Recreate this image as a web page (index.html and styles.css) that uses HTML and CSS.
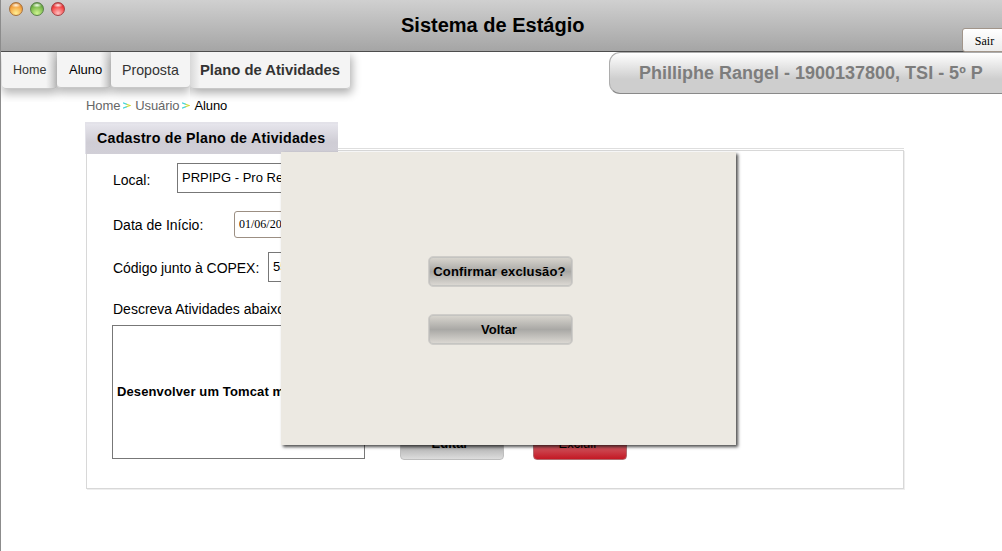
FILE: index.html
```html
<!DOCTYPE html>
<html lang="pt-BR">
<head>
<meta charset="utf-8">
<title>Sistema de Estágio</title>
<link rel="stylesheet" href="styles.css">
</head>
<body>
<div class="window">
  <header class="titlebar">
    <div class="lights"><i class="light amber"></i><i class="light green"></i><i class="light red"></i></div>
    <h1 class="app-title">Sistema de Estágio</h1>
    <button class="logout">Sair</button>
  </header>
  <div class="topbar">
    <nav class="tabs">
      <a class="tab tab-home"><span>Home</span></a>
      <a class="tab tab-student"><span>Aluno</span></a>
      <a class="tab tab-proposal"><span>Proposta</span></a>
      <a class="tab tab-plan"><span>Plano de Atividades</span></a>
    </nav>
    <div class="user"><span>Philliphe Rangel - 1900137800, TSI - 5º P</span></div>
  </div>
  <div class="crumbs"><span>Home</span><svg class="sep" viewBox="0 0 8 7"><path class="sep-tail" d="M0 .8 4 2.4M0 6.2 4 4.6" /><path class="sep-tip" d="M3.5 2.2 7.2 3.5 3.5 4.8" /></svg><span>Usuário</span><svg class="sep" viewBox="0 0 8 7"><path class="sep-tail" d="M0 .8 4 2.4M0 6.2 4 4.6" /><path class="sep-tip" d="M3.5 2.2 7.2 3.5 3.5 4.8" /></svg><span class="current">Aluno</span></div>
  <main class="panel">
    <h2 class="panel-title"><span>Cadastro de Plano de Atividades</span></h2>
    <form class="form">
      <div class="row row-place"><label>Local:</label><div class="field place">PRPIPG - Pro Reitoria</div></div>
      <div class="row row-date"><label>Data de Início:</label><div class="field date">01/06/2012</div></div>
      <div class="row row-code"><label>Código junto à COPEX:</label><div class="field code">5555</div></div>
      <label class="describe">Descreva Atividades abaixo:</label>
      <div class="row row-text">
        <div class="textarea">Desenvolver um Tomcat melhor</div>
        <div class="btn edit">Editar</div>
        <div class="btn delete">Excluir</div>
      </div>
    </form>
  </main>
  <div class="dialog">
    <button class="btn choice confirm">Confirmar exclusão?</button>
    <button class="btn choice">Voltar</button>
  </div>
</div>
</body>
</html>
```
FILE: styles.css
```css
* { box-sizing: border-box; }
body { margin: 0; background: #fff; font-family: "Liberation Sans", Arial, sans-serif; color: #000; }
.window { position: relative; width: 1002px; height: 551px; overflow: hidden; border-left: 1px solid #8c8c8c; }

.titlebar { display: grid; grid-template-columns: 400px 561px 40px; height: 52px; border-bottom: 1px solid #4d4d4d; background: linear-gradient(#d0d0d0, #a5a5a5); }
.lights { display: flex; gap: 7px; padding: 2px 0 0 8px; }
.light { width: 14px; height: 14px; border-radius: 50%; border: 1px solid; }
.amber { border-color: #a5713d; background: radial-gradient(ellipse 5px 2.5px at 50% 18%, #fff8e8, transparent), radial-gradient(circle at 50% 85%, #ffef94, #f5a340 60%, #bd6512); }
.green { border-color: #59824a; background: radial-gradient(ellipse 5px 2.5px at 50% 18%, #f4ffee, transparent), radial-gradient(circle at 50% 85%, #cff590, #79b84b 60%, #3c7221); }
.red { border-color: #a54043; background: radial-gradient(ellipse 5px 2.5px at 50% 18%, #fff0f0, transparent), radial-gradient(circle at 50% 85%, #ffc0c0, #f34444 60%, #b41217); }
.app-title { margin: 12px 0 0; font-size: 20px; line-height: 26px; white-space: nowrap; }
.logout { align-self: end; width: 44px; height: 24px; margin-bottom: -1px; padding: 0 0 0 1px; border: 1px solid #a1958a; border-radius: 3px; background: linear-gradient(#fff, #ececec); font: 12px/24px "Liberation Serif", serif; letter-spacing: .1px; color: #000; }

.topbar { display: flex; justify-content: space-between; align-items: flex-start; height: 42px; }
.tabs { display: flex; align-items: flex-start; height: 50px; padding-left: 1px; clip-path: inset(0 -16px 0 0); }
.tab { display: flex; align-items: center; height: 37px; border-bottom: 1px solid #c8c8c8; border-radius: 0 0 4px 4px; color: #333; background: linear-gradient(90deg, #f4f4f4 80%, #cfcfcf); box-shadow: 0 5px 10px rgba(0,0,0,.28); white-space: nowrap; }
.tab-home { width: 55px; padding-left: 11px; font-size: 12.5px; }
.tab-student { width: 54px; height: 36px; padding-left: 12px; font-size: 13px; color: #000; }
.tab-proposal { position: relative; width: 79px; height: 36px; padding-left: 11px; font-size: 14.2px; background: #f4f4f4; }
.tab-plan { width: 160px; padding-left: 10px; font-size: 14.8px; font-weight: bold; background: linear-gradient(90deg, #d8d8d8, #f4f4f4 10px); box-shadow: 2px 4px 10px rgba(0,0,0,.33); clip-path: inset(0 -16px -16px 0); }
.user { width: 393px; height: 42px; padding-left: 29px; border: 1px solid #adadad; border-bottom-color: #898989; border-right: 0; border-radius: 11px 0 0 11px; background: linear-gradient(#fff, #cecece 65%, #cecece); color: #7d7d7d; font-size: 18px; font-weight: bold; line-height: 41px; white-space: nowrap; }

.crumbs { display: flex; height: 28px; padding: 3px 0 0 85px; font-size: 13px; line-height: 17px; letter-spacing: -.1px; color: #666; }
.crumbs .current { color: #000; }
.sep { width: 8px; height: 7px; margin: 5px 4px 0 3px; fill: none; stroke-width: 1.2; }
.sep-tail { stroke: #45d5d8; }
.sep-tip { stroke: #cfda3c; }

.panel { width: 820px; height: 368px; margin-left: 84px; display: flex; flex-direction: column; }
.panel-title { z-index: 1; width: 253px; height: 32px; margin: 0; padding-left: 11px; border-top: 2px solid #e3e2e9; border-left: 1px solid #e3e2e9; background: linear-gradient(#e6e5ec, #cfcdd5 60%, #d1cfd7); font-size: 14.2px; line-height: 28px; letter-spacing: .26px; white-space: nowrap; }
.form { width: 818px; height: 339px; margin: -4px 0 0 1px; padding: 12px 0 0 25px; border: 1px solid #d8d8d8; box-shadow: 1px 1px 0 #eee, 0 -1px 0 #fff, 0 -2px 0 #dedede; font-size: 14px; display: flex; flex-direction: column; }
.row { display: flex; align-items: center; white-space: nowrap; }
.row label { margin-left: 1px; padding-top: 4px; }
.field { border: 1px solid #777; background: #fff; }
.row-place { height: 30px; }
.row-place label { width: 64px; }
.place { width: 380px; height: 30px; padding-left: 4px; font-size: 13px; line-height: 27px; }
.row-date { height: 27px; margin-top: 18px; }
.row-date label { width: 121px; padding: 0; }
.date { width: 90px; height: 27px; padding-left: 4px; border-color: #9c8f83; border-radius: 3px; font: 12px/25px "Liberation Serif", serif; }
.row-code { height: 30px; margin-top: 14px; }
.row-code label { width: 155px; padding-top: 2px; letter-spacing: -.04px; }
.code { width: 80px; height: 30px; padding-left: 4px; font-size: 13px; line-height: 27px; }
.describe { margin: 19px 0 0 1px; line-height: 16px; height: 24px; white-space: nowrap; }
.row-text { align-items: flex-end; }
.textarea { width: 253px; height: 134px; padding-left: 4px; border: 1px solid #777; font-size: 13px; font-weight: bold; line-height: 132px; letter-spacing: .12px; overflow: hidden; }
.btn { border: 1px solid #bebebe; border-radius: 4px; font-family: inherit; font-size: 13px; font-weight: bold; color: #000; text-align: center; white-space: nowrap; }
.edit { width: 104px; height: 31px; margin-left: 35px; margin-bottom: -1px; padding-right: 4px; line-height: 27px; background: linear-gradient(#ddd, #aaa 50%, #ddd); }
.delete { width: 94px; height: 31px; margin-left: 29px; margin-bottom: -1px; padding-right: 4px; border-color: #b26b70; line-height: 27px; font-weight: normal; background: linear-gradient(#c8202a, #d06068 50%, #c41824); }

/* Confirmation dialog floats above the form */
.dialog { position: absolute; z-index: 2; left: 280px; top: 152px; width: 455px; height: 293px; padding: 104px 0 0 147px; display: flex; flex-direction: column; gap: 27px; background: #ece9e2; box-shadow: 2px 2px 3px rgba(0,0,0,.7); }
.choice { width: 145px; height: 31px; padding: 0 3px 0 0; border: 1px solid #cfcdc9; border-radius: 5px; line-height: 28px; background: linear-gradient(#dad7d0, #a9a8a5 50%, #dedbd5); box-shadow: inset 0 0 0 1px rgba(190,190,188,.75); }
.confirm { padding-right: 2px; letter-spacing: .16px; }
```
